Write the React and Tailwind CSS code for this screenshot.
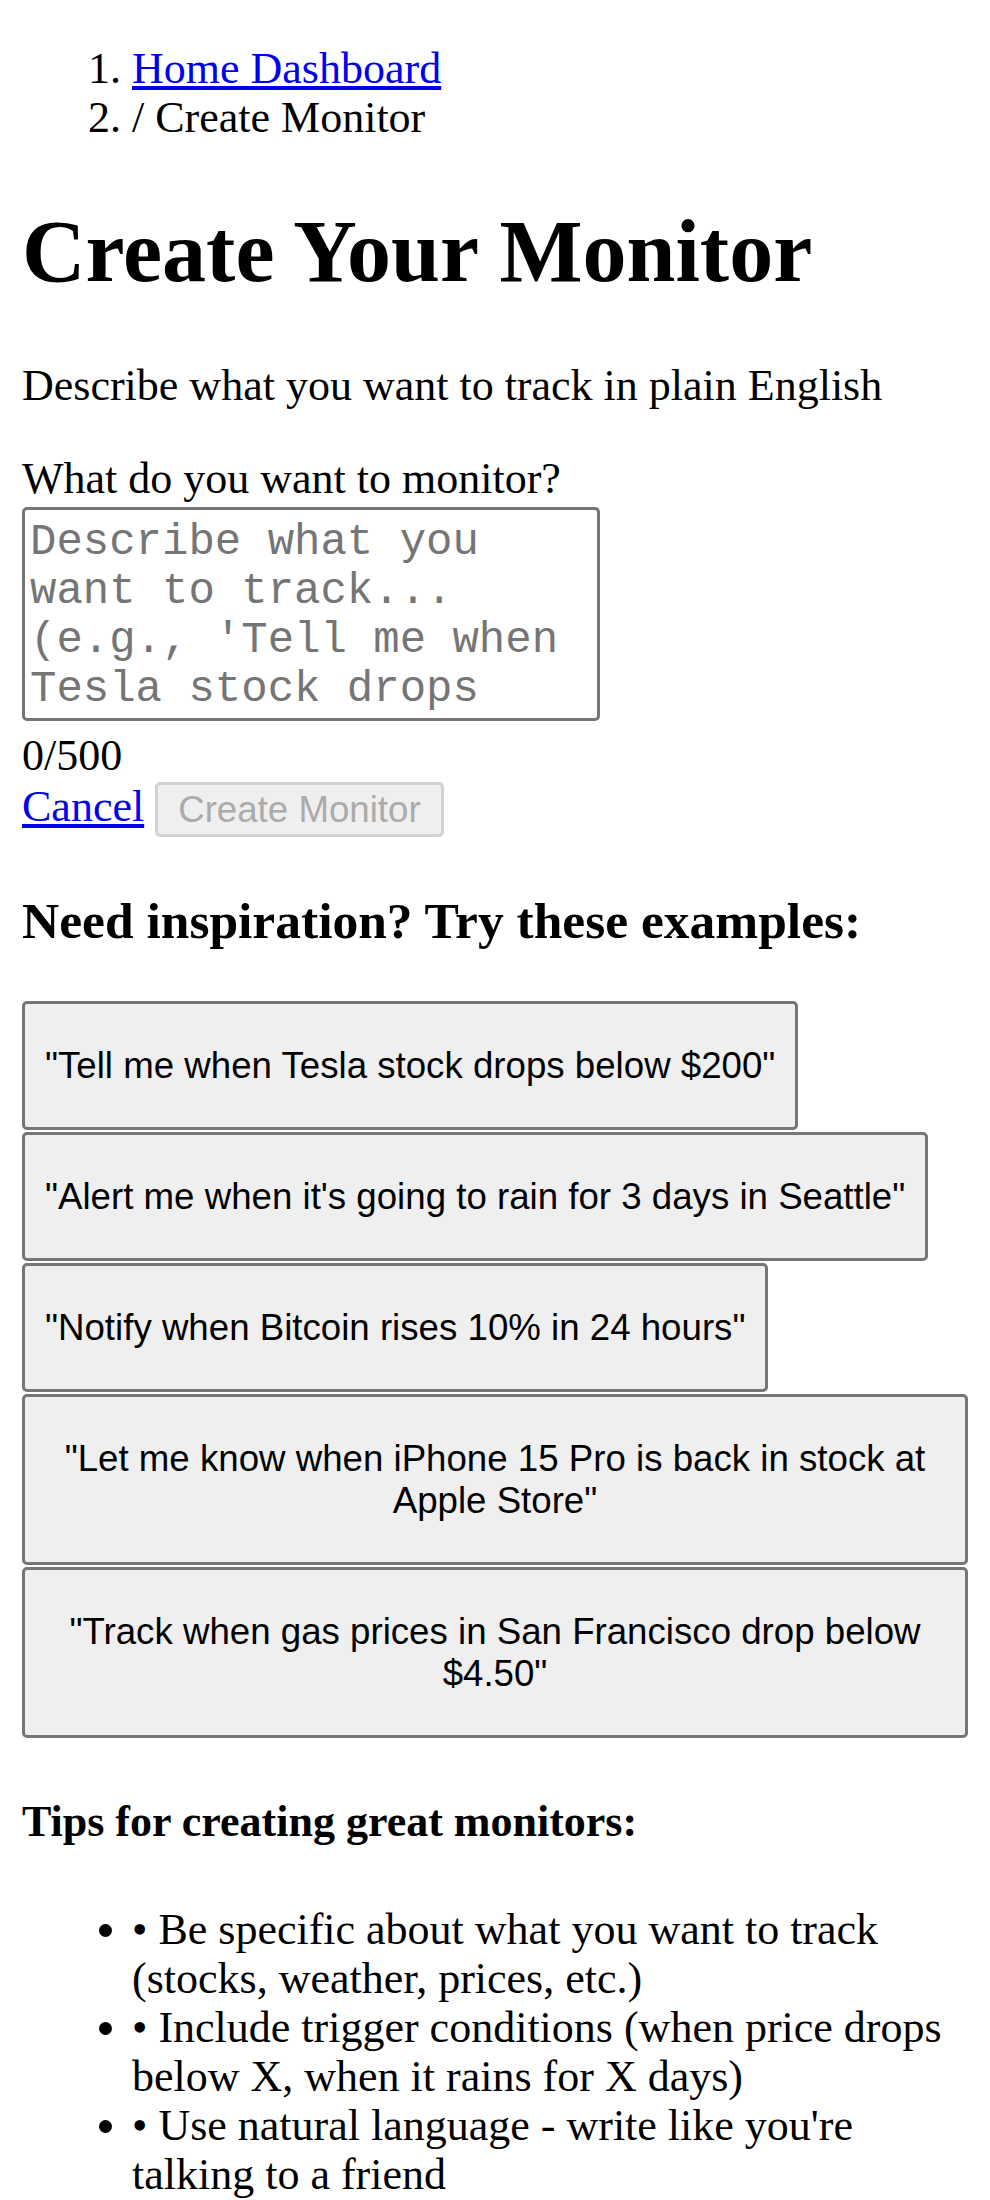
import React, { useState } from 'react';

const examples = [
  '"Tell me when Tesla stock drops below $200"',
  '"Alert me when it\'s going to rain for 3 days in Seattle"',
  '"Notify when Bitcoin rises 10% in 24 hours"',
  '"Let me know when iPhone 15 Pro is back in stock at Apple Store"',
  '"Track when gas prices in San Francisco drop below $4.50"',
];

const tips = [
  '• Be specific about what you want to track (stocks, weather, prices, etc.)',
  '• Include trigger conditions (when price drops below X, when it rains for X days)',
  "• Use natural language - write like you're talking to a friend",
];

const App = () => {
  const [query, setQuery] = useState('');

  return (
    <div className="min-h-screen bg-white px-[22px] pt-[44px] pb-[40px] font-['Liberation_Serif','Times_New_Roman',serif] text-[44px] leading-[49px] text-black">
      {/* Breadcrumb */}
      <ol className="list-decimal pl-[110px]">
        <li>
          <a href="#" className="text-[#0000ee] underline">Home Dashboard</a>
        </li>
        <li>/ Create Monitor</li>
      </ol>

      <h1 className="mt-[59px] mb-[59px] text-[88px] font-bold leading-[101px]">
        Create Your Monitor
      </h1>
      <p>Describe what you want to track in plain English</p>

      {/* Form */}
      <label htmlFor="monitor" className="mt-[44px] block">
        What do you want to monitor?
      </label>
      <textarea
        id="monitor"
        value={query}
        maxLength={500}
        onChange={(e) => setQuery(e.target.value)}
        placeholder="Describe what you want to track... (e.g., 'Tell me when Tesla stock drops below $200')"
        className="mt-[4px] block h-[214px] w-[578px] resize-none overflow-hidden rounded-[5px] border-[3px] border-[#767676] px-[5px] pt-[8px] pb-[3px] font-['Liberation_Mono','Courier_New',monospace] text-[44px] leading-[49px] placeholder:text-[#757575]"
      />
      <div className="mt-[10px]">{query.length}/500</div>
      <div className="mt-[2px] flex items-start gap-[11px]">
        <a href="#" className="text-[#0000ee] underline">Cancel</a>
        <button
          disabled={!query.trim()}
          className="h-[55px] rounded-[5px] border-[3px] border-[#d2d2d2] bg-[#efefef] px-[20px] font-['Liberation_Sans',Arial,sans-serif] text-[36.67px] leading-[42px] text-[#ababab]"
        >
          Create Monitor
        </button>
      </div>

      {/* Examples */}
      <h3 className="mt-[54px] mb-[51px] text-[51.5px] font-bold leading-[59px]">
        Need inspiration? Try these examples:
      </h3>
      <div className="flex flex-col items-start gap-[2px]">
        {examples.map((ex) => (
          <button
            key={ex}
            onClick={() => setQuery(ex.replace(/"/g, ''))}
            className="max-w-full rounded-[5px] border-[3px] border-[#767676] bg-[#efefef] px-[20px] py-[40.5px] text-center font-['Liberation_Sans',Arial,sans-serif] text-[36.67px] leading-[42px] text-black"
          >
            {ex}
          </button>
        ))}
      </div>

      {/* Tips */}
      <h4 className="mt-[58px] text-[44px] font-bold leading-[51px]">
        Tips for creating great monitors:
      </h4>
      <ul className="mt-[58px] list-disc pl-[110px]">
        {tips.map((tip) => (
          <li key={tip}>{tip}</li>
        ))}
      </ul>
    </div>
  );
};

export default App;
